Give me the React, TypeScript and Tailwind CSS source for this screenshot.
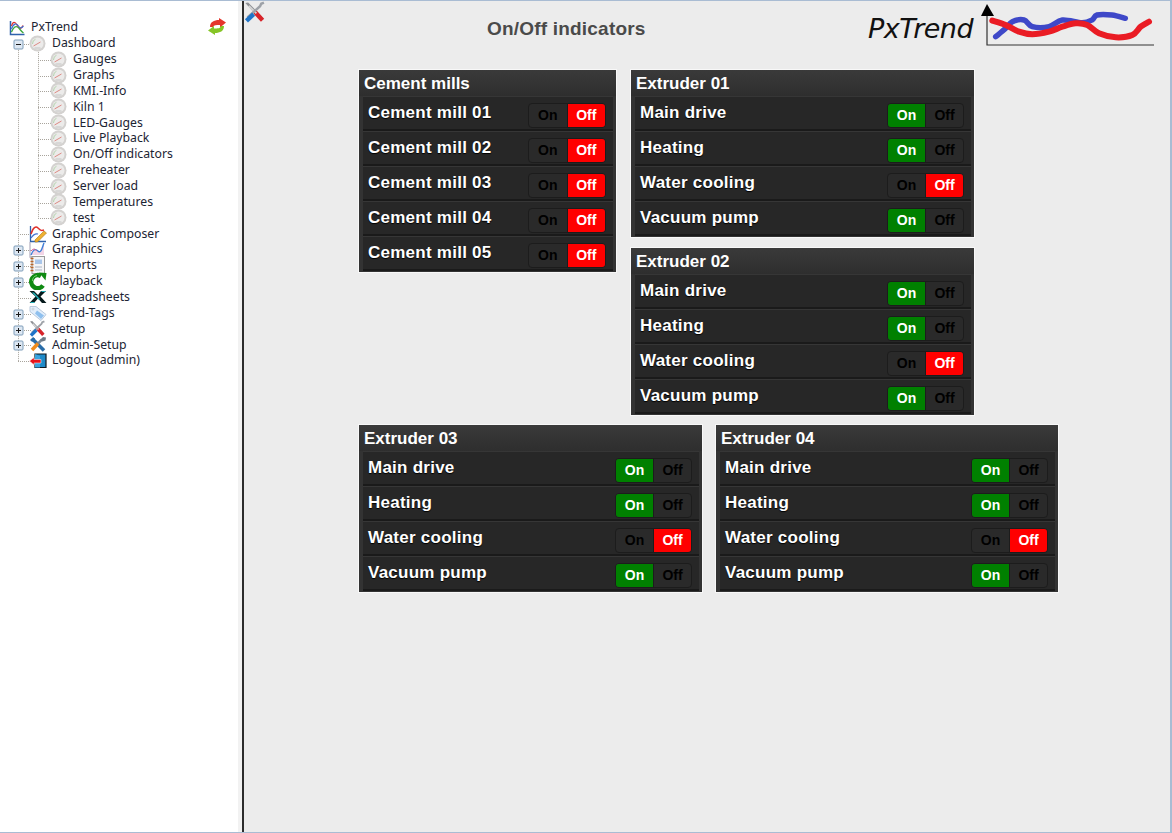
import React from "react";

function Gauge() {
  return (
    <svg width="17" height="17" viewBox="0 0 17 17" className="shrink-0">
      <circle cx="8.500" cy="8.500" r="8" fill="#d4d2d0" />
      <circle cx="8.500" cy="8.500" r="6" fill="#ecebea" />
      <path d="M3.500 9A5 5 0 0 1 6.500 4.200" fill="none" stroke="#b4d4ae" strokeWidth="1" />
      <path d="M4.500 11L11.500 7" stroke="#dc8a84" strokeWidth="1" />
      <path d="M5.500 13h6" stroke="#c4c4c4" strokeWidth="1" />
    </svg>
  );
}
function ChartIcon() {
  return (
    <svg width="16" height="16" viewBox="0 0 16 16" fill="none" className="shrink-0">
      <path d="M1.500 1v13.500H15.500" stroke="#2f62ac" strokeWidth="1.500" />
      <path d="M2.500 6C4 1 6 1.500 8 5s4 5 6 .5" stroke="#e0302a" strokeWidth="1.300" />
      <path d="M2.500 12c2-5 4-6 6-5s3 4 6 6" stroke="#3aa83a" strokeWidth="1.300" />
      <path d="M2.500 9c2-6 5-6 7-3s3 2 5 0" stroke="#3f6fd0" strokeWidth="1.100" />
    </svg>
  );
}
function ComposerIcon() {
  return (
    <svg width="18" height="18" viewBox="0 0 18 18" fill="none" className="shrink-0">
      <path d="M1.500 1v15.500H17" stroke="#2f62ac" strokeWidth="1.300" />
      <path d="M2 9C4 2 7 1 9 3s3 3 6 2" stroke="#e0302a" strokeWidth="1.500" />
      <path d="M2 13c2-3 4-5 7-4" stroke="#3f6fd0" strokeWidth="1.200" />
      <path d="M6 15L15 6l2.500 2-9 9H6z" fill="#f0b030" stroke="#a87818" strokeWidth=".6" />
    </svg>
  );
}
function GraphicsIcon() {
  return (
    <svg width="17" height="17" viewBox="0 0 17 17" fill="none" className="shrink-0">
      <path d="M1 1v15h15" stroke="#b9b4c4" strokeWidth="1.300" />
      <path d="M2 14c2-5 4-7 7-4s4-3 6-8v12H2z" fill="#f3d5e6" />
      <path d="M2 14c2-5 4-7 7-4s4-3 6-8" stroke="#3f7fd8" strokeWidth="1.400" />
      <path d="M2 10c3-3 4-2 6 0" stroke="#d85a8a" strokeWidth="1" />
    </svg>
  );
}
function ReportsIcon() {
  return (
    <svg width="17" height="18" viewBox="0 0 17 18" fill="none" className="shrink-0">
      <rect x="3" y=".5" width="12.500" height="17" fill="#f4f4f6" stroke="#9a9a9a" />
      <rect x="6" y="3.500" width="7" height="4.500" fill="#a9c6ea" />
      <path d="M6 11h7M6 14h7" stroke="#a9b4c4" />
      <path d="M1.500 2.500h3M1.500 5.500h3M1.500 8.500h3M1.500 11.500h3M1.500 14.500h3" stroke="#b8662a" strokeWidth="1.500" />
    </svg>
  );
}
function PlaybackIcon() {
  return (
    <svg width="18" height="18" viewBox="0 0 18 18" fill="none" className="shrink-0">
      <path d="M14 13.500A6.500 6.500 0 1 1 12 4" stroke="#0f8a12" strokeWidth="4.500" />
      <path d="M10 .5l7.500.5-1 7.500z" fill="#0f8a12" />
      <path d="M3.500 9A5.500 5.500 0 0 1 8 3.500" stroke="#6fd06a" strokeWidth="1" />
    </svg>
  );
}
function SheetIcon() {
  return (
    <svg width="18" height="14" viewBox="0 0 18 14" className="shrink-0">
      <path d="M.5 1H5l4 4 3-4h5l-5.500 5.500L17.500 13H13L9 8.500 5 13H.5l6-6.500z" fill="#061a1c" />
      <path d="M3 2.500h2l6 6.500-1 1z" fill="#20b0b8" />
      <path d="M1.500 12.500h4M12.500 1.500h4" stroke="#20b0b8" />
    </svg>
  );
}
function TagIcon() {
  return (
    <svg width="18" height="17" viewBox="0 0 18 16" className="shrink-0">
      <path d="M1 1h6l10 8-5 6L1 6z" fill="#e2eefb" stroke="#b9c9dc" />
      <path d="M8 5l7 5-3 3.500-6-5.500z" fill="#8fc0ee" />
      <circle cx="4" cy="3.500" r="1" fill="#fff" stroke="#9ab" strokeWidth=".5" />
    </svg>
  );
}
function SetupIcon({ size = 17 }: { size?: number }) {
  return (
    <svg width={size} height={size} viewBox="0 0 16 16" fill="none" className="shrink-0">
      <path d="M1 1.500L3 1l11 11.500-1.500 2z" fill="#8e9094" />
      <path d="M8 8l5.500 6" stroke="#d8242a" strokeWidth="3.200" />
      <path d="M3.500 3.500L9 9" stroke="#d6d6d6" strokeWidth="1.400" />
      <path d="M14.500 1.200l-2 .8-.8 1.800L2.500 12" stroke="#9ea2a8" strokeWidth="1.800" />
      <path d="M7 9.500L1.800 14.500" stroke="#1f74c8" strokeWidth="3.200" />
    </svg>
  );
}
function AdminIcon() {
  return (
    <svg width="18" height="17" viewBox="0 0 18 16" fill="none" className="shrink-0">
      <path d="M3 2l12 12" stroke="#2a6da8" strokeWidth="3.500" />
      <path d="M1 3.500L4 .8l2 1.200-.5 2.500-2.500.8z" fill="#2a6da8" />
      <path d="M13 3L9 7" stroke="#7d8a96" strokeWidth="2.500" />
      <path d="M9 7l-6 6.500" stroke="#f08c1c" strokeWidth="3.500" />
      <path d="M11 3.500L14 .5l3 .5-.5 3-3 1z" fill="#6d7a86" />
    </svg>
  );
}
function LogoutIcon() {
  return (
    <svg width="18" height="17" viewBox="0 0 18 16" fill="none" className="shrink-0">
      <path d="M6 1.500h11v13.500H6z" fill="#1f8ac8" stroke="#101820" strokeWidth="1.200" />
      <path d="M6 1.500l5 2v11.500H6z" fill="#3aa4e0" />
      <path d="M.5 8.500l4.500-3.500v2h7v3.500H5v2z" fill="#e8141c" stroke="#fff" strokeWidth=".5" />
    </svg>
  );
}
function RefreshIcon() {
  return (
    <svg width="18" height="17" viewBox="0 0 18 17">
      <path d="M2 9C2 4 6 2 11 2V0l7 4.500-6 5V7C8 7 6 7 5 9z" fill="#e5352c" />
      <path d="M16 8c0 5-4 7-9 7v2L0 12.500 6 8v2.500c4 0 6 0 7-2.500z" fill="#86c526" />
    </svg>
  );
}

const ROW = 15.87;
const rowY = (i: number) => 27 + i * ROW;
function TreeLines() {
  const c = "#a8a49c";
  const expanders = [1, 14, 15, 16, 18, 19, 20];
  const level1 = [1, 13, 14, 15, 16, 17, 18, 19, 20, 21];
  const level2 = [2, 3, 4, 5, 6, 7, 8, 9, 10, 11, 12];
  return (
    <svg className="absolute left-0 top-0" width="238" height="380">
      <path d={`M18.500 ${rowY(1)}V${rowY(21)}`} stroke={c} strokeDasharray="1 1" fill="none" />
      <path d={`M38.500 ${rowY(1) + 6}V${rowY(12)}`} stroke={c} strokeDasharray="1 1" fill="none" />
      {level1.map((i) => (
        <path key={i} d={`M18 ${Math.round(rowY(i)) + 0.5}H31`} stroke={c} strokeDasharray="1 1" fill="none" />
      ))}
      {level2.map((i) => (
        <path key={i} d={`M38 ${Math.round(rowY(i)) + 0.5}H51`} stroke={c} strokeDasharray="1 1" fill="none" />
      ))}
      {expanders.map((i) => {
        const y = Math.round(rowY(i));
        return (
          <g key={i}>
            <rect x="14" y={y - 4} width="9" height="9" rx="1" fill="#dde7f2" stroke="#7f9db9" />
            <path d={`M16 ${y + 0.5}h5`} stroke="#1a1a1a" />
            {i !== 1 && <path d={`M18.500 ${y - 2}v5`} stroke="#1a1a1a" />}
          </g>
        );
      })}
    </svg>
  );
}

const tree: { label: string; level: 0 | 1 | 2; icon: React.ReactNode }[] = [
  { label: "PxTrend", level: 0, icon: <ChartIcon /> },
  { label: "Dashboard", level: 1, icon: <Gauge /> },
  ...["Gauges", "Graphs", "KMI.-Info", "Kiln 1", "LED-Gauges", "Live Playback", "On/Off indicators", "Preheater", "Server load", "Temperatures", "test"].map(
    (label) => ({ label, level: 2 as const, icon: <Gauge /> })
  ),
  { label: "Graphic Composer", level: 1, icon: <ComposerIcon /> },
  { label: "Graphics", level: 1, icon: <GraphicsIcon /> },
  { label: "Reports", level: 1, icon: <ReportsIcon /> },
  { label: "Playback", level: 1, icon: <PlaybackIcon /> },
  { label: "Spreadsheets", level: 1, icon: <SheetIcon /> },
  { label: "Trend-Tags", level: 1, icon: <TagIcon /> },
  { label: "Setup", level: 1, icon: <SetupIcon /> },
  { label: "Admin-Setup", level: 1, icon: <AdminIcon /> },
  { label: "Logout (admin)", level: 1, icon: <LogoutIcon /> },
];

const levelClass = {
  0: "pl-[9px]",
  1: "pl-[29px]",
  2: "pl-[50px]",
};
const iconClass = {
  0: "w-[22px]",
  1: "w-[23px]",
  2: "w-[23px]",
};

function Sidebar() {
  return (
    <aside className="relative w-[238px] shrink-0 bg-white pt-[18.6px]">
      <TreeLines />
      <div className="absolute left-[208px] top-[17px]">
        <RefreshIcon />
      </div>
      {tree.map((t) => (
        <div key={t.label} className={`relative flex h-[15.87px] items-center ${levelClass[t.level]}`}>
          <span className={`flex shrink-0 items-center ${iconClass[t.level]}`}>{t.icon}</span>
          <span className="whitespace-nowrap font-['Noto_Sans',sans-serif] text-[12.25px] leading-none text-[#1c2433]">{t.label}</span>
        </div>
      ))}
    </aside>
  );
}

const redPts: [number, number][] = [[10.3, 19.7], [23.7, 24], [37, 30.7], [50.3, 33.3], [67, 30.7], [80.3, 25.7], [93.7, 22.3], [105.3, 24], [117, 32.3], [133.7, 36.3], [150.3, 34], [158.7, 25.7], [167, 20.7]];
const bluePts: [number, number][] = [[13.7, 35.7], [23.7, 27.3], [30.3, 20.7], [42, 19], [50.3, 25.7], [67, 25.7], [80.3, 19], [100, 21.7], [110, 19], [115, 14], [130, 14], [143.3, 17.3]];

function smooth(p: [number, number][]) {
  let d = `M${p[0][0]} ${p[0][1]}`;
  for (let i = 0; i < p.length - 1; i++) {
    const a = p[Math.max(i - 1, 0)];
    const b = p[i];
    const c = p[i + 1];
    const e = p[Math.min(i + 2, p.length - 1)];
    d += `C${b[0] + (c[0] - a[0]) / 6} ${b[1] + (c[1] - a[1]) / 6} ${c[0] - (e[0] - b[0]) / 6} ${c[1] - (e[1] - b[1]) / 6} ${c[0]} ${c[1]}`;
  }
  return d;
}

function Logo() {
  return (
    <div className="flex items-start">
      <span className="mt-[11px] font-['DejaVu_Sans',sans-serif] text-[27px] font-extralight italic leading-[34px] tracking-[-0.5px] text-[#111]">PxTrend</span>
      <svg className="ml-[8px]" width="173" height="46" viewBox="-1 0 173 46" fill="none">
        <path d="M5 14V44H172" stroke="#333" strokeWidth="1.200" />
        <path d="M-1 15L5 3 12 15z" fill="#000" />
        <path d={smooth(bluePts)} stroke="#3e48c8" strokeWidth="5.500" strokeLinecap="round" />
        <path d={smooth(redPts)} stroke="#ea1c24" strokeWidth="6" strokeLinecap="round" />
      </svg>
    </div>
  );
}

function Switch({ on, wide }: { on: boolean; wide: boolean }) {
  return (
    <div className={`mr-[7px] mt-[4px] flex h-[25px] overflow-hidden rounded-[4px] border border-[#1c1c1c] bg-[#2a2a2a] font-['Liberation_Sans',sans-serif] text-[14px] font-bold ${wide ? "w-[78px]" : "w-[77px]"}`}>
      <span className={`flex flex-1 items-center justify-center ${on ? "bg-[#008000] text-white" : "text-black"}`}>On</span>
      <span className={`flex flex-1 items-center justify-center border-l border-[#1c1c1c] ${on ? "text-black" : "bg-[#ff0000] text-white"}`}>Off</span>
    </div>
  );
}

function Row({ label, on, wide }: { label: string; on: boolean; wide: boolean }) {
  return (
    <div className="flex h-[35px] items-center justify-between border-b-2 border-t border-b-[#1a1a1a] border-t-[#363636] bg-[#272727] pl-[5px]">
      <span className="-mt-[1px] text-[17px] font-bold leading-none tracking-[0.25px] text-white [text-shadow:0_1px_1px_#000]">{label}</span>
      <Switch on={on} wide={wide} />
    </div>
  );
}

function Panel({ title, rows, className, wide = false }: { title: string; rows: [string, boolean][]; className: string; wide?: boolean }) {
  return (
    <section className={`shrink-0 bg-[#333333] pb-px font-['Liberation_Sans',sans-serif] outline outline-1 outline-[#f8f8f8] ${className}`}>
      <h2 className="flex h-[26px] items-center bg-gradient-to-b from-[#3a3a3a] to-[#2e2e2e] pl-[5px] pt-[2px] text-[17px] font-bold text-white">{title}</h2>
      <div className="ml-[4px] mr-[3px]">
        {rows.map(([label, on]) => (
          <Row key={label} label={label} on={on} wide={wide} />
        ))}
      </div>
    </section>
  );
}

const extruder: [string, boolean][] = [
  ["Main drive", true],
  ["Heating", true],
  ["Water cooling", false],
  ["Vacuum pump", true],
];
const mills: [string, boolean][] = [1, 2, 3, 4, 5].map((n) => [`Cement mill 0${n}`, false]);

export default function App() {
  return (
    <div className="flex h-[833px] w-[1172px] overflow-hidden border-b border-r-2 border-t border-b-[#a9bcd3] border-r-[#a9bcd3] border-t-[#a9bcd3] bg-[#ececec]">
      <Sidebar />
      <div className="w-[4px] shrink-0 bg-[#f2f2f2]" />
      <div className="w-[2px] shrink-0 bg-[#2c2c2c]" />
      <main className="flex-1">
        <header className="flex h-[69px] items-start">
          <SetupIcon size={22} />
          <h1 className="ml-[221px] mt-[17px] w-[381px] shrink-0 font-['Liberation_Sans',sans-serif] text-[19px] font-bold leading-[22px] tracking-[0.2px] text-[#4a4a4a]">On/Off indicators</h1>
          <Logo />
        </header>
        <div className="ml-[115px] flex flex-col gap-[10px]">
          <div className="flex items-start gap-[15px]">
            <Panel title="Cement mills" rows={mills} className="w-[257px]" wide />
            <div className="flex flex-col gap-[11px]">
              <Panel title="Extruder 01" rows={extruder} className="w-[343px]" />
              <Panel title="Extruder 02" rows={extruder} className="w-[343px]" />
            </div>
          </div>
          <div className="flex items-start gap-[14px]">
            <Panel title="Extruder 03" rows={extruder} className="w-[343px]" />
            <Panel title="Extruder 04" rows={extruder} className="w-[342px]" />
          </div>
        </div>
      </main>
    </div>
  );
}
